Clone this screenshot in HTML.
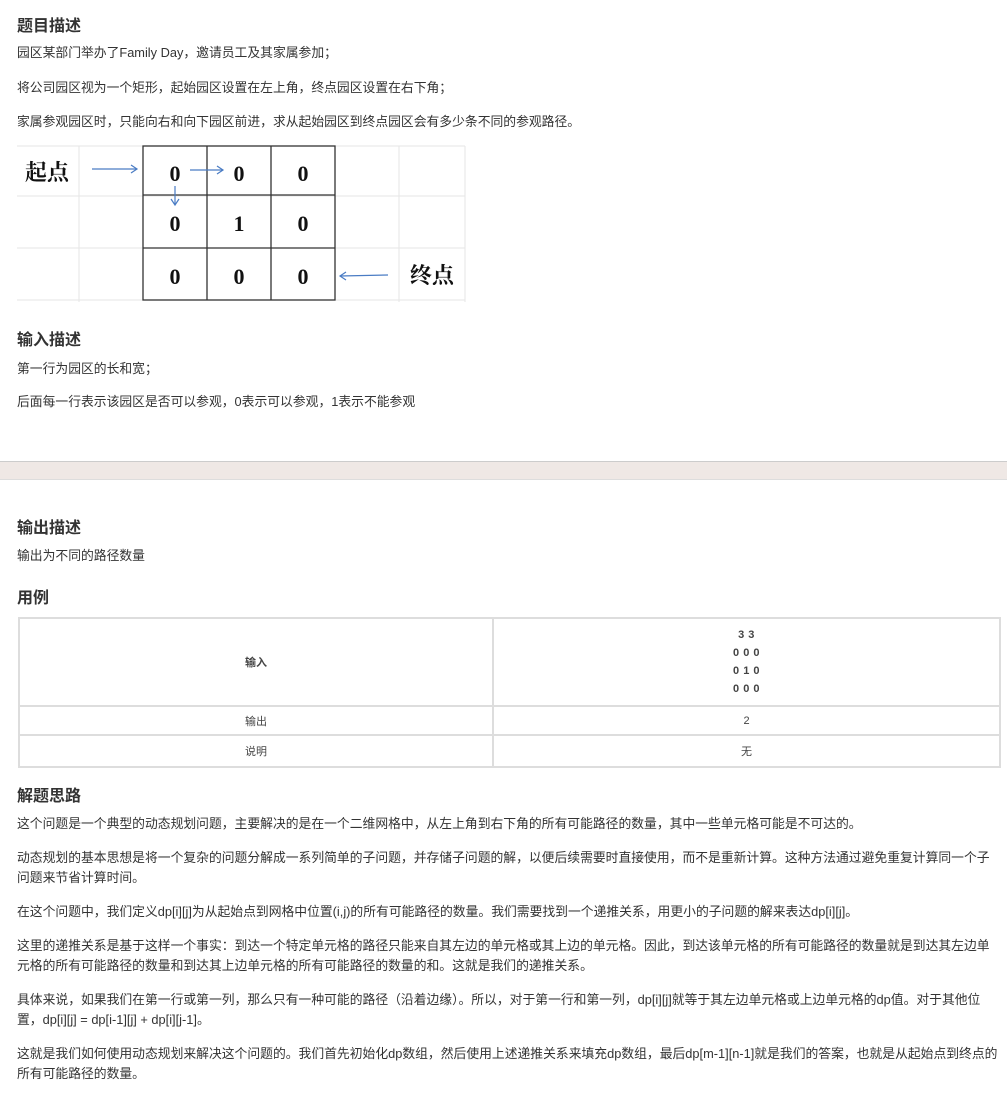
<!DOCTYPE html>
<html><head><meta charset="utf-8"><style>
body{margin:0;width:1007px;height:1095px;background:#fff;position:relative;overflow:hidden;font-family:"Liberation Sans","Noto Sans CJK SC",sans-serif;color:#333}
.t{position:absolute;left:17px;white-space:nowrap;font-size:12.8px;line-height:16px}
.h{position:absolute;left:17px;font-size:16px;font-weight:bold;line-height:20px;color:#333;white-space:nowrap}
.b{font-size:12.8px}
.band{position:absolute;left:0;top:461px;width:1007px;height:17px;background:#efe8e5;border-top:1px solid #ccc;border-bottom:1px solid #ddd}
table{position:absolute;left:18px;top:617px;width:983px;border-collapse:collapse;font-size:11px;color:#444}
td{border:2px solid #ddd;text-align:center;padding:0}
.m{font-family:"Liberation Sans",sans-serif;font-weight:bold;letter-spacing:0.5px;line-height:18px}
</style></head><body>
<div class="h" style="top:17px">题目描述</div>
<div class="t" style="top:45px">园区某部门举办了Family Day，邀请员工及其家属参加；</div>
<div class="t" style="top:80px">将公司园区视为一个矩形，起始园区设置在左上角，终点园区设置在右下角；</div>
<div class="t" style="top:114px">家属参观园区时，只能向右和向下园区前进，求从起始园区到终点园区会有多少条不同的参观路径。</div>

<svg style="position:absolute;left:0;top:0" width="480" height="310">
<g stroke="#e6e6e6" stroke-width="1">
<line x1="17" y1="146" x2="465" y2="146"/><line x1="17" y1="196" x2="465" y2="196"/>
<line x1="17" y1="248" x2="465" y2="248"/><line x1="17" y1="300" x2="465" y2="300"/>
<line x1="79" y1="146" x2="79" y2="302"/><line x1="399" y1="146" x2="399" y2="302"/><line x1="465" y1="146" x2="465" y2="302"/>
</g>
<g stroke="#333" stroke-width="1.3" fill="none">
<rect x="143" y="146" width="192" height="154"/>
<line x1="207" y1="146" x2="207" y2="300"/><line x1="271" y1="146" x2="271" y2="300"/>
<line x1="143" y1="195" x2="335" y2="195"/><line x1="143" y1="248" x2="335" y2="248"/>
</g>
<g stroke="#4a7cc4" stroke-width="1.2" fill="none">
<line x1="92" y1="169" x2="137" y2="169"/><polyline points="131,165 137,169 131,173"/>
<line x1="190" y1="170" x2="223" y2="170"/><polyline points="217,166 223,170 217,174"/>
<line x1="175" y1="186" x2="175" y2="205"/><polyline points="171,199 175,205 179,199"/>
<line x1="388" y1="275" x2="340" y2="276"/><polyline points="346,272 340,276 346,280"/>
</g>
<g font-family="Liberation Serif,Noto Serif CJK SC,serif" font-size="22" fill="#111" text-anchor="middle" font-weight="bold">
<text x="175" y="181">0</text><text x="239" y="181">0</text><text x="303" y="181">0</text>
<text x="175" y="231">0</text><text x="239" y="231">1</text><text x="303" y="231">0</text>
<text x="175" y="284">0</text><text x="239" y="284">0</text><text x="303" y="284">0</text>
<text x="47" y="180" font-size="22">起点</text>
<text x="432" y="283" font-size="22">终点</text>
</g>
</svg>

<div class="h" style="top:331px">输入描述</div>
<div class="t" style="top:361px">第一行为园区的长和宽；</div>
<div class="t" style="top:394px">后面每一行表示该园区是否可以参观，0表示可以参观，1表示不能参观</div>

<div class="band"></div>

<div class="h" style="top:519px">输出描述</div>
<div class="t" style="top:548px">输出为不同的路径数量</div>
<div class="h" style="top:589px">用例</div>
<table>
<tr style="height:88px"><td style="width:472px;font-weight:bold">输入</td><td class="m">3 3<br>0 0 0<br>0 1 0<br>0 0 0</td></tr>
<tr style="height:29px"><td>输出</td><td>2</td></tr>
<tr style="height:32px"><td>说明</td><td>无</td></tr>
</table>

<div class="h" style="top:787px">解题思路</div>
<div class="t b" style="top:816px">这个问题是一个典型的动态规划问题，主要解决的是在一个二维网格中，从左上角到右下角的所有可能路径的数量，其中一些单元格可能是不可达的。</div>
<div class="t b" style="top:850px">动态规划的基本思想是将一个复杂的问题分解成一系列简单的子问题，并存储子问题的解，以便后续需要时直接使用，而不是重新计算。这种方法通过避免重复计算同一个子</div>
<div class="t b" style="top:870px">问题来节省计算时间。</div>
<div class="t b" style="top:904px">在这个问题中，我们定义dp[i][j]为从起始点到网格中位置(i,j)的所有可能路径的数量。我们需要找到一个递推关系，用更小的子问题的解来表达dp[i][j]。</div>
<div class="t b" style="top:938px">这里的递推关系是基于这样一个事实：到达一个特定单元格的路径只能来自其左边的单元格或其上边的单元格。因此，到达该单元格的所有可能路径的数量就是到达其左边单</div>
<div class="t b" style="top:958px">元格的所有可能路径的数量和到达其上边单元格的所有可能路径的数量的和。这就是我们的递推关系。</div>
<div class="t b" style="top:992px">具体来说，如果我们在第一行或第一列，那么只有一种可能的路径（沿着边缘）。所以，对于第一行和第一列，dp[i][j]就等于其左边单元格或上边单元格的dp值。对于其他位</div>
<div class="t b" style="top:1012px">置，dp[i][j] = dp[i-1][j] + dp[i][j-1]。</div>
<div class="t b" style="top:1046px">这就是我们如何使用动态规划来解决这个问题的。我们首先初始化dp数组，然后使用上述递推关系来填充dp数组，最后dp[m-1][n-1]就是我们的答案，也就是从起始点到终点的</div>
<div class="t b" style="top:1066px">所有可能路径的数量。</div>
</body></html>
